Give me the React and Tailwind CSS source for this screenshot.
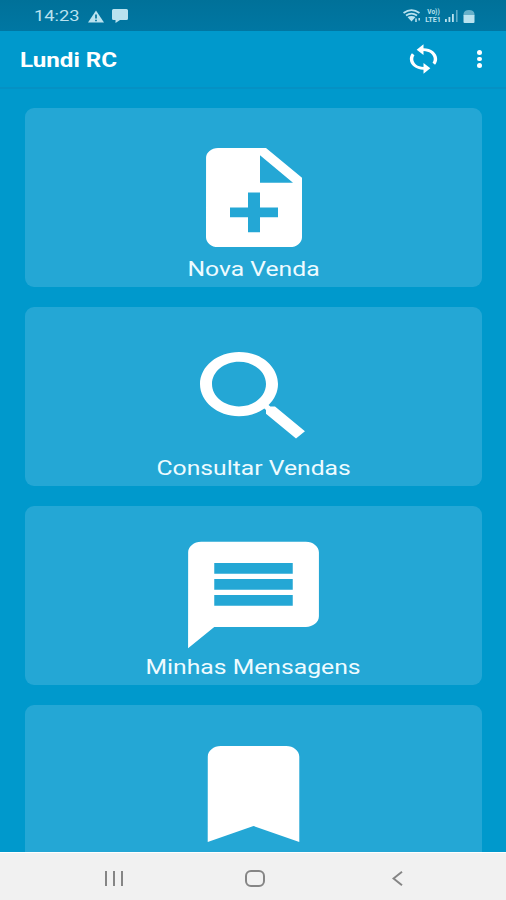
const icons = {
    note: 'M14 2H6c-1.1 0-1.99.9-1.99 2L4 20c0 1.1.89 2 1.99 2H18c1.1 0 2-.9 2-2V8l-6-6zm2 14h-3v3h-2v-3H8v-2h3v-3h2v3h3v2zm-3-7V3.5L18.5 9H13z',
    search: 'M15.5 14h-.79l-.28-.27C15.41 12.59 16 11.11 16 9.5 16 5.91 13.09 3 9.5 3S3 5.91 3 9.5 5.91 16 9.5 16c1.61 0 3.09-.59 4.23-1.57l.27.28v.79l5 4.99L20.49 19l-4.99-5zm-6 0C7.01 14 5 11.99 5 9.5S7.01 5 9.5 5 14 7.01 14 9.5 11.99 14 9.5 14z',
    message: 'M20 2H4c-1.1 0-1.99.9-1.99 2L2 22l4-4h14c1.1 0 2-.9 2-2V4c0-1.1-.9-2-2-2zm-2 12H6v-2h12v2zm0-3H6V9h12v2zm0-3H6V6h12v2z',
    bookmark: 'M17 3H7c-1.1 0-1.99.9-1.99 2L5 21l7-3 7 3V5c0-1.1-.9-2-2-2z',
    sync: 'M12 4V1L8 5l4 4V6c3.31 0 6 2.69 6 6 0 1.01-.25 1.97-.7 2.8l1.46 1.46C19.54 15.03 20 13.57 20 12c0-4.42-3.58-8-8-8zm0 14c-3.31 0-6-2.69-6-6 0-1.01.25-1.97.7-2.8L5.24 7.74C4.46 8.97 4 10.43 4 12c0 4.42 3.58 8 8 8v3l4-4-4-4v3z',
};

const menu = [
    { label: 'Nova Venda', icon: 'note', size: 'mt-[30px] w-[144px] h-[119px]', gap: '' },
    { label: 'Consultar Vendas', icon: 'search', size: 'mt-[30px] w-[144px] h-[119px]', gap: '' },
    { label: 'Minhas Mensagens', icon: 'message', size: 'mt-[25px] w-[157px] h-[128px]', gap: '-mt-1' },
    { label: '', icon: 'bookmark', size: 'mt-[25px] w-[157px] h-[128px]', gap: '' },
];

const Icon = ({ name, className }) => (
    <svg viewBox="0 0 24 24" preserveAspectRatio="none" fill="currentColor" className={className}>
        <path d={icons[name]} />
    </svg>
);

const StatusBar = () => (
    <div className="flex h-[31px] shrink-0 items-center bg-linear-to-b from-[#007199] to-[#0077a3] pl-[34px] pr-[31px] pt-px text-[#b9e2ef]">
        <span className="w-[54px] pt-px text-[15.5px] leading-none">
            <span className="inline-block origin-left scale-x-[1.18]">14:23</span>
        </span>
        {/* Warning */}
        <svg viewBox="0 0 16 13" className="h-[13px] w-4">
            <path d="M8 .5 16 12.5H0z" fill="currentColor" />
            <path d="M8 4.5v4M8 9.7v1.5" stroke="#00749d" strokeWidth="1.7" />
        </svg>
        {/* Message */}
        <svg viewBox="0 0 16 14" className="ml-2 h-[14px] w-4" fill="currentColor">
            <path d="M1.5 0h13q1.500 0 1.500 1.500v8q0 1.500-1.500 1.500H8l-4.500 3V11h-2Q0 11 0 9.500v-8Q0 0 1.500 0z" />
        </svg>
        <div className="flex-1" />
        {/* Wifi */}
        <svg viewBox="0 0 18 14" className="mr-px h-[14px] w-[18px]" fill="none" stroke="currentColor" strokeWidth="1.8">
            <path d="M.5 4Q8.500-1.600 16.500 4M3 6.500Q8.500 2.600 14 6.500" />
            <path d="M4.500 8Q8.500 5.800 12.500 8L8.500 12.500z" fill="currentColor" stroke="none" />
            <path d="M13 13V9.500M16.200 9v2.500" strokeWidth="1.500" />
        </svg>
        <div className="ml-[2px] flex h-[14px] w-[19px] flex-col items-center text-[6.500px] font-bold">
            <span className="h-[7px] leading-[6px]">Vo))</span>
            <span className="h-[7px] scale-x-110 leading-[8px]">LTE1</span>
        </div>
        {/* Signal */}
        <svg viewBox="0 0 13 12" className="ml-[2px] h-3 w-[13px]" fill="currentColor">
            <path d="M0 9h1.800v3H0zM3.500 7h1.800v5H3.500zM7 4h1.800v8H7z" />
            <path d="M11 0h1.600v12H11z" opacity=".5" />
        </svg>
        {/* Battery */}
        <svg viewBox="0 0 12 13" className="ml-[5px] h-[13px] w-3">
            <path d="M.500 5.500V4Q1 0 6 0t5.500 4v1.500z" fill="currentColor" opacity=".55" />
            <path d="M.500 5h11v7q0 1-1 1h-9q-1 0-1-1z" fill="currentColor" />
        </svg>
    </div>
);

const Card = ({ item }) => (
    <button className="flex h-[179px] w-full shrink-0 flex-col items-center rounded-[9px] bg-[#24a7d5] text-white">
        <Icon name={item.icon} className={`shrink-0 ${item.size}`} />
        <span className={`inline-block scale-x-[1.235] text-[20px] leading-6 text-[#eefbff] ${item.gap}`}>{item.label}</span>
    </button>
);

const App = () => {
    return (
        <div className="flex h-[900px] w-[506px] flex-col overflow-hidden bg-[#0099cc] font-['Roboto',sans-serif]">
            <StatusBar />

            <header className="flex h-[58px] shrink-0 items-center border-b-2 border-[#0591c4] pl-[20px] pr-[24px] text-white">
                <h1 className="flex-1 pt-[2px] text-[21px] font-bold leading-none">
                    <span className="inline-block origin-left scale-x-[1.15]">Lundi RC</span>
                </h1>
                <Icon name="sync" className="mr-[33px] h-8 w-[41px]" />
                <div className="flex flex-col gap-[2px]">
                    <span className="h-[4.500px] w-[5.500px] rounded-full bg-white" />
                    <span className="h-[4.500px] w-[5.500px] rounded-full bg-white" />
                    <span className="h-[4.500px] w-[5.500px] rounded-full bg-white" />
                </div>
            </header>

            <main className="flex min-h-0 flex-1 flex-col gap-5 overflow-hidden pl-[25px] pr-6 pt-[19px]">
                {menu.map((item) => (
                    <Card key={item.icon} item={item} />
                ))}
            </main>

            {/* Android navigation */}
            <nav className="flex h-12 shrink-0 items-center border-t border-white bg-[#f1f1f1] pl-[105px] pr-[103px] pt-[3px] text-[#858585]">
                <div className="flex gap-[6px]">
                    <span className="h-[15px] w-[2px] bg-current" />
                    <span className="h-[15px] w-[2px] bg-current" />
                    <span className="h-[15px] w-[2px] bg-current" />
                </div>
                <div className="ml-[122px] h-[17px] w-[20px] rounded-[6px] border-2 border-current" />
                <div className="flex-1" />
                <svg viewBox="0 0 11 15" className="h-[15px] w-[11px]" fill="none" stroke="currentColor" strokeWidth="2">
                    <path d="M10 .8 1.500 7.500 10 14.200" />
                </svg>
            </nav>
        </div>
    );
};

export default App;
